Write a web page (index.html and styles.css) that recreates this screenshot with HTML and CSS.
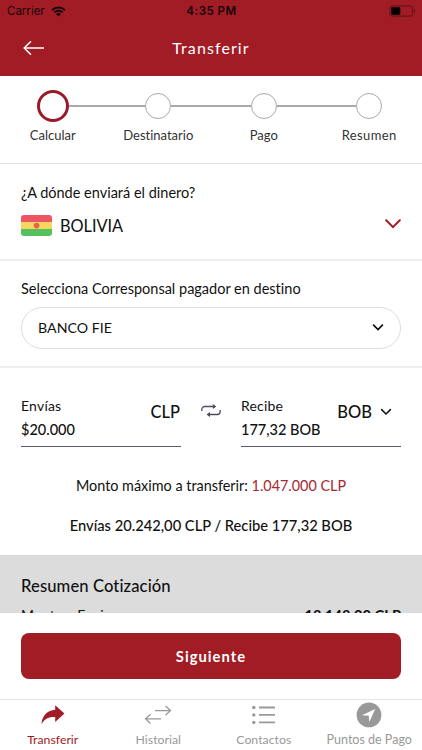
FILE: index.html
```html
<!DOCTYPE html>
<html lang="es">
  <head>
    <meta charset="UTF-8" />
    <meta name="viewport" content="width=device-width, initial-scale=1.0" />
    <title>Transferir</title>
    <link rel="stylesheet" href="styles.css">
  </head>
  <body>
    <header class="header">
      <div class="status">
        <div class="carrier">
          <span>Carrier</span>
          <svg width="15" height="11" viewBox="0 0 15 11">
            <path d="M1.1 4.1a9.2 9.2 0 0 1 12.8 0M3.3 6.4a6 6 0 0 1 8.4 0" fill="none" stroke="#15050a" stroke-width="1.9" />
            <path d="M5.1 8a3.4 3.4 0 0 1 4.8 0L7.5 10.5z" fill="#15050a" />
          </svg>
        </div>
        <span class="clock">4:35 PM</span>
        <svg class="battery" width="27" height="12" viewBox="0 0 27 12">
          <rect x="0.9" y="0.9" width="22.6" height="10.2" rx="2.4" fill="none" stroke="#5f1118" />
          <rect x="2.3" y="2.3" width="9" height="7.4" rx="0.8" fill="#000" />
          <path d="M24.8 4c1.8.7 1.8 3.3 0 4z" fill="#5f1118" />
        </svg>
      </div>
      <div class="title_bar">
        <svg class="back" width="22" height="16" viewBox="0 0 22 16">
          <path d="M21 8H1.5M8 1.2 1.2 8 8 14.8" fill="none" stroke="#fff" stroke-width="1.5" />
        </svg>
        <h1 class="title">Transferir</h1>
      </div>
    </header>

    <main class="content">
      <ol class="steps">
        <li class="step active"><span class="circle"></span><span class="step_name">Calcular</span></li>
        <li class="step"><span class="circle"></span><span class="step_name">Destinatario</span></li>
        <li class="step"><span class="circle"></span><span class="step_name">Pago</span></li>
        <li class="step"><span class="circle"></span><span class="step_name resumen">Resumen</span></li>
      </ol>

      <section class="country">
        <p class="label">¿A dónde enviará el dinero?</p>
        <div class="country_row">
          <svg width="31" height="21" viewBox="0 0 31 21">
            <path d="M3 0h25a3 3 0 0 1 3 3v4H0V3a3 3 0 0 1 3-3z" fill="#ed5565" />
            <path d="M0 7h31v7H0z" fill="#f6d660" />
            <path d="M0 14h31v4a3 3 0 0 1-3 3H3a3 3 0 0 1-3-3z" fill="#55c15d" />
            <circle cx="15.6" cy="10.6" r="2.8" fill="#e8604e" />
          </svg>
          <span class="country_name">BOLIVIA</span>
          <svg class="arrow" width="16" height="10" viewBox="0 0 16 10">
            <path d="M1.2 1.3 8 8.1l6.8-6.8" fill="none" stroke="#a11c25" stroke-width="2" stroke-linecap="round" />
          </svg>
        </div>
      </section>

      <section class="bank">
        <p class="label">Selecciona Corresponsal pagador en destino</p>
        <div class="select">
          <span class="bank_name">BANCO FIE</span>
          <svg width="12" height="8" viewBox="0 0 12 8">
            <path d="M1.6 1.2 6 5.6l4.4-4.4" fill="none" stroke="#111" stroke-width="1.7" stroke-linecap="round" />
          </svg>
        </div>
      </section>

      <section class="amounts">
        <div class="fields">
          <div class="field">
            <div>
              <p class="field_label">Envías</p>
              <p class="value">$20.000</p>
            </div>
            <span class="currency clp">CLP</span>
          </div>
          <svg class="swap" width="20" height="14" viewBox="0 0 20 14">
            <path d="M.8 7V5.5a3 3 0 0 1 3-3H14M19.2 6v1.5a3 3 0 0 1-3 3H7" fill="none" stroke="#514b61" stroke-width="1.3" />
            <path d="M11.8 0 15.300 2.500l-3.500 2.500zM9 8 5.500 10.500 9 13z" fill="#514b61" />
          </svg>
          <div class="field">
            <div>
              <p class="field_label">Recibe</p>
              <p class="value">177,32 BOB</p>
            </div>
            <span class="currency bob">BOB
              <svg width="12" height="8" viewBox="0 0 12 8">
                <path d="M1.6 1.6 6 6l4.4-4.4" fill="none" stroke="#111" stroke-width="1.5" stroke-linecap="round" />
              </svg>
            </span>
          </div>
        </div>
        <p class="limit">Monto máximo a transferir: <span class="red">1.047.000 CLP</span></p>
        <p class="total">Envías 20.242,00 CLP / Recibe 177,32 BOB</p>
      </section>

      <section class="quote">
        <h2 class="quote_title">Resumen Cotización</h2>
        <div class="quote_row">
          <span class="quote_name">Monto a Enviar</span>
          <span class="quote_value">18.148,00 CLP</span>
        </div>
      </section>
    </main>

    <div class="action">
      <button class="next" type="button">Siguiente</button>
    </div>

    <nav class="tabs">
      <a class="tab selected">
        <svg width="26" height="26" viewBox="0 0 26 26">
          <path d="M15.2 3.2 24.4 11.6 15.2 20v-5C8.5 14.6 4.5 17 1.5 22.2 2 14.5 6.5 8.5 15.2 7.8z" fill="#a11c25" />
        </svg>
        <span class="tab_name">Transferir</span>
      </a>
      <a class="tab">
        <svg width="28" height="26" viewBox="0 0 28 26">
          <path d="M11 8.6h15.5M21.5 4l5 4.6-5 4.6M17 16.8H1.5M6.5 12.2l-5 4.6 5 4.6" fill="none" stroke="#999" stroke-width="1.3" />
        </svg>
        <span class="tab_name">Historial</span>
      </a>
      <a class="tab">
        <svg width="26" height="26" viewBox="0 0 26 26">
          <path d="M8 5.5h16M8 12.9h16M8 20.4h16" stroke="#999" stroke-width="1.8" />
          <circle cx="2.8" cy="5.5" r="1.7" fill="#999" />
          <circle cx="2.8" cy="12.9" r="1.7" fill="#999" />
          <circle cx="2.8" cy="20.4" r="1.7" fill="#999" />
        </svg>
        <span class="tab_name">Contactos</span>
      </a>
      <a class="tab">
        <svg width="26" height="26" viewBox="0 0 26 26">
          <circle cx="13" cy="12.9" r="12.4" fill="#999" />
          <path d="M19.2 7 6 13.3l6.7.5.7 6.2z" fill="#fff" />
        </svg>
        <span class="tab_name puntos">Puntos de Pago</span>
      </a>
    </nav>
  </body>
</html>
```
FILE: styles.css
```css
* {
  margin: 0;
  padding: 0;
  box-sizing: border-box;
}
body {
  display: flex;
  flex-direction: column;
  height: 750px;
  overflow: hidden;
  font-family: Lato, sans-serif;
  font-size: 14.5px;
  font-variant-ligatures: none;
  color: #111;
  background-color: #fff;
}
svg {
  display: block;
  flex-shrink: 0;
}

.header {
  height: 76px;
  flex-shrink: 0;
  background-color: #a11c25;
}
.status {
  display: grid;
  grid-template-columns: 1fr auto 1fr;
  align-items: center;
  height: 22px;
  padding: 0 6px 0 7px;
  font-family: Inter, sans-serif;
  font-size: 11.5px;
  color: #15050a;
}
.carrier {
  display: flex;
  align-items: center;
  gap: 6px;
}
.clock {
  font-weight: 600;
  letter-spacing: 0.5px;
}
.battery {
  justify-self: end;
}
.title_bar {
  display: grid;
  grid-template-columns: 1fr auto 1fr;
  align-items: center;
  height: 52px;
  padding: 0 23px;
}
.title {
  margin-top: -2px;
  font-size: 16px;
  font-weight: 400;
  letter-spacing: 1.1px;
  color: #fff;
}

.content {
  flex: 1;
  min-height: 0;
  overflow: hidden;
}
.steps {
  display: grid;
  grid-template-columns: repeat(4, 1fr);
  height: 88px;
  padding-top: 14px;
  list-style: none;
  border-bottom: 1px solid #e3e3e3;
}
.step {
  display: grid;
  grid-template-columns: 1fr auto 1fr;
  grid-template-rows: 32px 25px;
  align-items: center;
}
.step::before,
.step::after {
  content: "";
  height: 2px;
  background-color: #aaa;
}
.step::before {
  grid-area: 1 / 1;
}
.step::after {
  grid-area: 1 / 3;
}
.step:first-child::before,
.step:last-child::after {
  background-color: transparent;
}
.circle {
  grid-area: 1 / 2;
  width: 26px;
  height: 26px;
  border: 1px solid #aaa;
  border-radius: 50%;
}
.active .circle {
  width: 32px;
  height: 32px;
  border: 3px solid #991b29;
}
.step_name {
  grid-area: 2 / 1 / 3 / 4;
  justify-self: center;
  font-size: 13px;
  color: #333;
}
.resumen {
  letter-spacing: 0.4px;
}

.country {
  height: 97px;
  padding: 19px 21px 0;
  border-bottom: 2px solid #eee;
}
.label {
  line-height: 20px;
}
.country_row {
  display: flex;
  align-items: center;
  gap: 8px;
  height: 28px;
  margin-top: 8px;
}
.country_name {
  font-size: 16.3px;
}
.arrow {
  margin-left: auto;
  margin-bottom: 2px;
}

.bank {
  height: 107px;
  padding: 18px 21px 0;
  border-bottom: 2px solid #eee;
}
.select {
  display: flex;
  align-items: center;
  justify-content: space-between;
  height: 42px;
  margin-top: 8px;
  padding: 0 16px;
  border: 1px solid #ddd;
  border-radius: 21px;
}
.bank_name {
  margin-top: -2px;
  font-size: 14.2px;
}

.amounts {
  height: 187px;
  padding: 26px 21px 0;
}
.fields {
  display: grid;
  grid-template-columns: 160px 20px 160px;
  justify-content: space-between;
}
.field {
  display: flex;
  justify-content: space-between;
  height: 53px;
  border-bottom: 1px solid #5d596b;
}
.field_label {
  font-size: 14px;
  line-height: 23px;
  letter-spacing: 0.2px;
}
.value {
  line-height: 26px;
  font-weight: 500;
}
.currency {
  display: flex;
  align-items: center;
  height: 36px;
  font-size: 16.5px;
  font-weight: 500;
}
.clp {
  padding-right: 1px;
}
.bob {
  gap: 8px;
  padding-right: 9px;
}
.swap {
  margin-top: 10px;
}
.limit,
.total {
  text-align: center;
  line-height: 20px;
  white-space: nowrap;
}
.limit {
  margin-top: 29px;
  font-size: 14.4px;
}
.total {
  margin-top: 19px;
  font-size: 14.7px;
  font-weight: 500;
}
.red {
  color: #a62832;
}

.quote {
  height: 160px;
  padding: 20px 21px 0;
  background-color: #dcdcdc;
}
.quote_title {
  font-size: 16.6px;
  font-weight: 500;
  line-height: 22px;
  letter-spacing: 0.1px;
}
.quote_row {
  display: flex;
  justify-content: space-between;
  margin-top: 8px;
  line-height: 20px;
}
.quote_name {
  font-size: 14px;
  letter-spacing: 0.1px;
}
.quote_value {
  font-size: 14.7px;
  font-weight: 700;
}

.action {
  flex-shrink: 0;
  height: 86px;
  padding: 20px 21px 0;
}
.next {
  display: block;
  width: 100%;
  height: 46px;
  border: none;
  border-radius: 8px;
  background-color: #a11c25;
  color: #fff;
  font-family: inherit;
  font-size: 14.8px;
  font-weight: 700;
  letter-spacing: 1px;
}

.tabs {
  display: grid;
  grid-template-columns: repeat(4, 1fr);
  flex-shrink: 0;
  height: 51px;
  border-top: 1px solid #e6e6e6;
}
.tab {
  display: flex;
  flex-direction: column;
  align-items: center;
  padding-top: 2px;
  color: #999;
}
.tab_name {
  margin-top: 4px;
  font-size: 12.3px;
  line-height: 16px;
}
.puntos {
  font-size: 12.5px;
}
.selected {
  color: #a11c25;
}
```
